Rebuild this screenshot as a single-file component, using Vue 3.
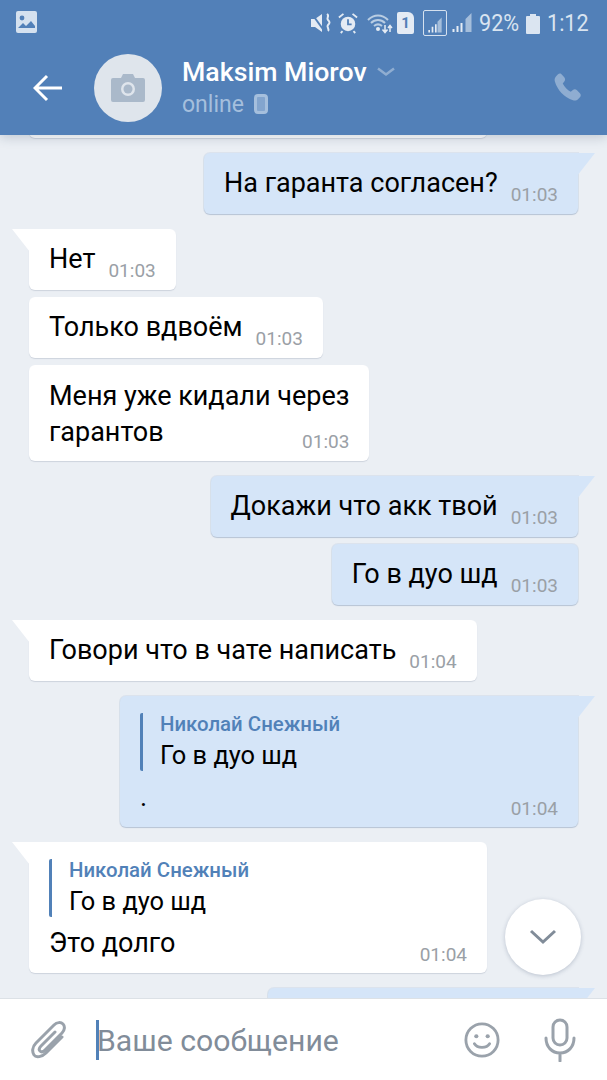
<template>
  <div class="screen">
    <header class="top">
      <div class="status">
        <svg class="st-pic" width="21" height="22" viewBox="0 0 21 22">
          <rect x="0" y="0" width="21" height="22" rx="2" fill="#d5e1ef" />
          <circle cx="6" cy="7" r="2.4" fill="#5280b8" />
          <path d="M2 17l5-5 3 3 5-5 4 5v2H2z" fill="#5280b8" />
        </svg>
        <div class="st-right">
          <svg width="22" height="24" viewBox="0 0 20 24">
            <path d="M0 8h4l7-5v18l-7-5H0z" fill="#e4ebf4" />
            <path d="M1 3l13 18" stroke="#5280b8" stroke-width="2" />
            <path d="M16 3c3 2-1 4 1 6s2 3 0 5 2 4 0 6" stroke="#e4ebf4" stroke-width="2" fill="none" />
          </svg>
          <svg class="gap-alarm" width="20" height="24" viewBox="0 0 22 24">
            <circle cx="11" cy="13" r="8" fill="#e4ebf4" />
            <path d="M11 8v5.500h4" stroke="#5280b8" stroke-width="2" fill="none" />
            <path d="M1 6l5-4M21 6l-5-4M5 21l-2 2M17 21l2 2" stroke="#e4ebf4" stroke-width="2" />
          </svg>
          <svg class="gap-wifi" width="26" height="24" viewBox="0 0 26 24">
            <path d="M1 9c6-6 14-6 20 0M4 12c4-4 10-4 14 0M7 15c2.500-2 5.500-2 8 0" stroke="#b9cde3" stroke-width="2" fill="none" />
            <circle cx="11" cy="18" r="2" fill="#e4ebf4" />
            <path d="M18 14v7M15.500 18.500l2.500 3 2.500-3M23 21v-6M21 17l2-2.500 2 2.500" stroke="#e4ebf4" stroke-width="1.500" fill="none" />
          </svg>
          <div class="sim">1</div>
          <div class="sig-box">
            <svg width="24" height="24" viewBox="0 0 24 24">
              <path d="M20 3v18h-5V8z" fill="#a5bedb" />
              <path d="M4 21h2v-3H4zM8 21h2v-7H8zM12 21h2v-10h-2z" fill="#e4ebf4" />
            </svg>
          </div>
          <svg class="gap-sig" width="21" height="24" viewBox="0 0 20 24">
            <path d="M20 2v19h-6V8z" fill="#a5bedb" />
            <path d="M1 21h2v-3H1zM5 21h2v-6H5zM9 21h2v-9H9z" fill="#e4ebf4" />
          </svg>
          <span class="st-text pct">92%</span>
          <svg class="gap-bat" width="14" height="24" viewBox="0 0 14 24">
            <path d="M4 3h6v2h3a1 1 0 0 1 1 1v16a1 1 0 0 1-1 1H1a1 1 0 0 1-1-1V6a1 1 0 0 1 1-1h3z" fill="#dbe5f1" />
          </svg>
          <span class="st-text clock">1:12</span>
        </div>
      </div>
      <div class="nav">
        <svg class="back" width="30" height="28" viewBox="0 0 30 28">
          <path d="M14 2L2 14l12 12M2 14h27" stroke="#fff" stroke-width="3" fill="none" />
        </svg>
        <div class="avatar">
          <svg width="34" height="28" viewBox="0 0 34 28">
            <path d="M2 4h8l2-4h10l2 4h8a2 2 0 0 1 2 2v20a2 2 0 0 1-2 2H2a2 2 0 0 1-2-2V6a2 2 0 0 1 2-2z" fill="#aab9ca" />
            <circle cx="17" cy="15" r="7" fill="#dfe5ec" />
            <circle cx="17" cy="15" r="4.500" fill="#aab9ca" />
          </svg>
        </div>
        <div class="who">
          <div class="name-row">
            <span class="name">Maksim Miorov</span>
            <svg width="18" height="10" viewBox="0 0 18 10">
              <path d="M1 1.500l8 6 8-6" stroke="#8fadd1" stroke-width="2.500" fill="none" />
            </svg>
          </div>
          <div class="online-row">
            <span>online</span>
            <svg width="14" height="20" viewBox="0 0 14 20">
              <rect x="1.500" y="1.500" width="11" height="17" rx="2.500" fill="#83a5ce" stroke="#a5bfdd" stroke-width="3" />
            </svg>
          </div>
        </div>
        <svg class="phone" width="30" height="30" viewBox="0 0 24 24">
          <path d="M6.600 1.500c-1-.4-2-.2-2.800.5L2.500 3.300C1.400 4.400 1 6 1.500 7.500c2 6.800 7.300 12.700 14.500 15 1.500.5 3.100.1 4.200-1l1.300-1.300c.8-.8 1-2.200.2-3.100l-2.500-2.500c-.9-.9-2.300-1-3.300-.2l-1.700 1.400c-2.800-1.600-5-3.900-6.400-6.700l1.400-1.800c.7-1 .6-2.300-.2-3.200z" fill="#8fadd1" />
        </svg>
      </div>
    </header>

    <main class="chat">
      <div class="bubble in cut"></div>
      <div
        v-for="m in messages"
        :key="m.id"
        class="bubble"
        :class="[m.out ? 'out' : 'in', { tail: m.tail, quote: m.quote, stack: m.stack, next: m.next, wide: m.quote }]"
      >
        <div v-if="m.quote" class="reply">
          <div class="reply-name">Николай Снежный</div>
          <div class="reply-text">{{ m.quote }}</div>
        </div>
        <div class="body">
          <span class="text" v-html="m.text"></span>
          <span class="time">{{ m.time }}</span>
        </div>
      </div>
      <div class="bubble out tail last"></div>

      <button class="down">
        <svg width="28" height="16" viewBox="0 0 28 16">
          <path d="M2 2l12 11L26 2" stroke="#818c99" stroke-width="3" fill="none" />
        </svg>
      </button>
    </main>

    <footer class="composer">
      <svg class="clip" width="36" height="40" viewBox="0 0 36 40">
        <path d="M32 17L16 33c-4 4-10 5-12 2s-2-8 2-12L24 5c3-3 7-3 9-1s2 6-1 9L15 30c-2 2-4 2-5 1s-1-3 1-5l14-14" stroke="#9aa2ab" stroke-width="3" fill="none" stroke-linecap="round" />
      </svg>
      <div class="field">
        <span class="caret"></span>
        <span class="placeholder">Ваше сообщение</span>
      </div>
      <svg class="smile" width="36" height="36" viewBox="0 0 38 38">
        <circle cx="19" cy="19" r="17" stroke="#9aa2ab" stroke-width="3" fill="none" />
        <circle cx="13" cy="15" r="2.200" fill="#9aa2ab" />
        <circle cx="25" cy="15" r="2.200" fill="#9aa2ab" />
        <path d="M11 23c3 5 13 5 16 0" stroke="#9aa2ab" stroke-width="3" fill="none" stroke-linecap="round" />
      </svg>
      <svg class="mic" width="32" height="44" viewBox="0 0 32 44">
        <rect x="9" y="2" width="14" height="25" rx="7" stroke="#9aa2ab" stroke-width="3" fill="none" />
        <path d="M2 20c0 9 6 15 14 15s14-6 14-15M16 35v8" stroke="#9aa2ab" stroke-width="3" fill="none" stroke-linecap="round" />
      </svg>
    </footer>
  </div>
</template>

<script setup>
const messages = [
  { id: 1, out: true, tail: true, text: 'На гаранта согласен?', time: '01:03' },
  { id: 2, tail: true, text: 'Нет', time: '01:03' },
  { id: 3, next: true, text: 'Только вдвоём', time: '01:03' },
  { id: 4, next: true, stack: true, text: 'Меня уже кидали через<br>гарантов', time: '01:03' },
  { id: 5, out: true, tail: true, text: 'Докажи что акк твой', time: '01:03' },
  { id: 6, out: true, next: true, text: 'Го в дуо шд', time: '01:03' },
  { id: 7, tail: true, text: 'Говори что в чате написать', time: '01:04' },
  { id: 8, out: true, tail: true, quote: 'Го в дуо шд', text: '.', time: '01:04' },
  { id: 9, tail: true, quote: 'Го в дуо шд', text: 'Это долго', time: '01:04' }
]
</script>

<style>
html,
body {
  margin: 0;
  background: #ebeff4;
}
</style>

<style scoped>
.screen {
  width: 607px;
  height: 1080px;
  display: flex;
  flex-direction: column;
  overflow: hidden;
  font-family: Roboto, "Noto Sans", sans-serif;
  background: #ebeff4;
}

.top {
  height: 135px;
  flex: none;
  background: #5280b8;
  position: relative;
  z-index: 2;
  box-shadow: 0 3px 10px rgba(60, 80, 110, 0.22);
}

.status {
  height: 45px;
  padding: 11px 18px 0 16px;
  box-sizing: border-box;
  display: flex;
  justify-content: space-between;
}

.st-right {
  display: flex;
  align-items: flex-start;
  height: 24px;
}

.gap-alarm { margin-left: 6px; }
.gap-wifi { margin-left: 9px; }
.gap-sig { margin-left: 4px; }
.gap-bat { margin-left: 7px; }

.sim {
  width: 17px;
  height: 22px;
  margin: 1px 0 0 4px;
  background: #e4ebf4;
  border-radius: 2px 6px 2px 2px;
  color: #5280b8;
  font-size: 15px;
  font-weight: 700;
  line-height: 22px;
  text-align: center;
}

.sig-box {
  width: 24px;
  height: 26px;
  margin: -1px 0 0 9px;
  border: 1.5px solid #d5e1ef;
  border-radius: 2px;
  box-sizing: border-box;
  display: flex;
  align-items: flex-end;
  justify-content: center;
}

.sig-box svg {
  width: 20px;
  height: 20px;
}

.st-text {
  color: #d9e4f0;
  font-size: 24px;
  line-height: 24px;
  transform: scaleX(0.9);
}

.pct {
  margin-left: 7px;
  transform-origin: left;
  width: 40px;
}

.clock {
  margin-left: 7px;
  transform-origin: left;
  width: 42px;
}

.nav {
  height: 90px;
  display: flex;
  align-items: flex-start;
}

.back {
  margin: 29px 0 0 33px;
}

.avatar {
  width: 68px;
  height: 68px;
  margin: 9px 0 0 31px;
  border-radius: 50%;
  background: #dfe5ec;
  display: flex;
  align-items: center;
  justify-content: center;
}

.who {
  margin: 9px 0 0 20px;
  flex: 1;
}

.name-row {
  display: flex;
  align-items: center;
  gap: 10px;
  height: 36px;
}

.name {
  color: #fff;
  font-size: 26.7px;
  font-weight: 500;
}

.online-row {
  display: flex;
  align-items: center;
  gap: 10px;
  height: 28px;
  color: #a5bfdd;
  font-size: 23px;
}

.phone {
  margin: 27px 24px 0 0;
}

.chat {
  flex: 1;
  min-height: 0;
  position: relative;
  overflow: hidden;
  display: flex;
  flex-direction: column;
  padding: 0 29px 0 29px;
}

.bubble {
  position: relative;
  box-sizing: border-box;
  min-height: 61px;
  margin-top: 15px;
  padding: 15px 20px 0 20px;
  border-radius: 6px;
  flex: none;
  color: #000;
}

.bubble.next {
  margin-top: 7px;
}

.bubble.in {
  align-self: flex-start;
  background: #fff;
  box-shadow: 0 1px 1px rgba(70, 90, 120, 0.18);
}

.bubble.out {
  align-self: flex-end;
  background: #d5e5f8;
  box-shadow: 0 0 0 1px rgba(90, 130, 180, 0.1), 0 1px 1px rgba(70, 100, 140, 0.24);
}

.bubble.tail.in {
  border-top-left-radius: 0;
}

.bubble.tail.out {
  border-top-right-radius: 0;
}

.bubble.tail::before {
  content: "";
  position: absolute;
  top: 0;
  width: 18px;
  height: 23px;
}

.bubble.tail.in::before {
  left: -17px;
  background: #fff;
  clip-path: polygon(0 0, 100% 0, 100% 100%);
}

.bubble.tail.out::before {
  right: -17px;
  background: #d5e5f8;
  clip-path: polygon(0 0, 100% 0, 0 100%);
}

.cut {
  width: 458px;
  height: 60px;
  margin-top: -58px;
}

.last {
  width: 310px;
  margin-top: 15px;
}

.wide {
  width: 458px;
}

.body {
  display: flex;
  align-items: flex-start;
  gap: 13px;
}

.text {
  font-size: 27px;
  line-height: 30px;
}

.time {
  color: #9aa0a6;
  font-size: 19px;
  line-height: 22px;
  margin: 16px 0 0 auto;
}

.stack {
  padding-top: 13px;
  padding-bottom: 8px;
}

.stack .body {
  flex-direction: column;
  gap: 0;
}

.stack .text {
  line-height: 36px;
}

.stack .time {
  align-self: flex-end;
  margin-top: -19px;
}

.quote {
  padding-top: 17px;
  padding-bottom: 7px;
}

.reply {
  border-left: 3px solid #5181b8;
  border-radius: 2px;
  padding-left: 17px;
  height: 58px;
}

.reply-name {
  color: #5181b8;
  font-size: 20.4px;
  font-weight: 500;
  line-height: 23px;
}

.reply-text {
  font-size: 25.4px;
  line-height: 34px;
  margin-top: 2px;
}

.quote .body {
  margin-top: 11px;
  align-items: flex-start;
}

.quote .time {
  margin-top: 16px;
}

.down {
  position: absolute;
  left: 505px;
  top: 764px;
  width: 76px;
  height: 76px;
  padding: 0;
  border: 0;
  border-radius: 50%;
  background: #fff;
  box-shadow: 0 1px 4px rgba(60, 80, 110, 0.28);
  display: flex;
  align-items: center;
  justify-content: center;
  z-index: 1;
}

.composer {
  height: 82px;
  flex: none;
  box-sizing: border-box;
  background: #fff;
  border-top: 1px solid #dce1e6;
  display: flex;
  align-items: center;
  position: relative;
  z-index: 2;
}

.clip {
  margin-left: 30px;
  flex: none;
}

.field {
  margin-left: 30px;
  flex: 1;
  display: flex;
  align-items: center;
  height: 40px;
}

.caret {
  width: 3px;
  height: 40px;
  background: #5181b8;
  flex: none;
}

.placeholder {
  color: #818c99;
  font-size: 30.2px;
  margin: 2px 0 0 -2px;
}

.smile {
  margin-right: 44px;
  flex: none;
}

.mic {
  margin-right: 31px;
  flex: none;
}
</style>
